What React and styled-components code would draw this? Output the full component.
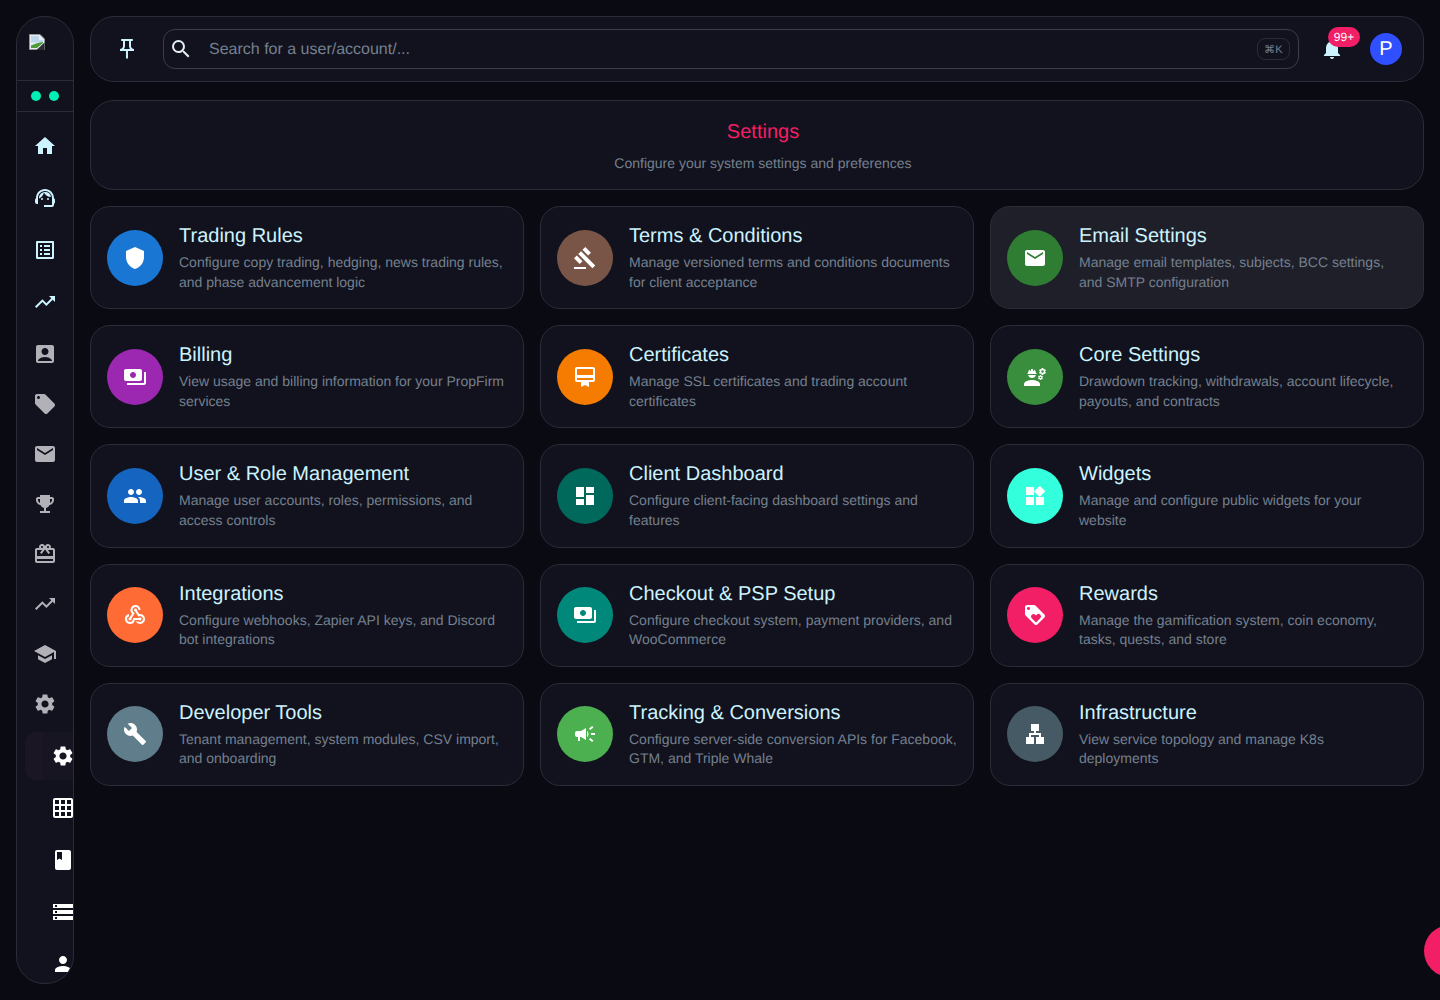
import React from 'react';
import styled, { createGlobalStyle } from 'styled-components';
import {
  MdHome, MdOutlineSupportAgent, MdOutlineListAlt, MdTrendingUp, MdAccountBox, MdLocalOffer, MdEmail,
  MdEmojiEvents, MdOutlineRedeem, MdSchool, MdSettings, MdGridOn, MdBook, MdStorage, MdPerson,
  MdOutlinePushPin, MdSearch, MdNotifications, MdShield, MdGavel, MdPayments, MdCardMembership,
  MdEngineering, MdPeople, MdDashboard, MdWidgets, MdWebhook, MdLoyalty, MdBuild, MdCampaign, MdLan,
} from 'react-icons/md';

const GlobalStyle = createGlobalStyle`
  html, body { margin: 0; padding: 0; height: 100%; background: #090a12; }
  body { font-family: "Liberation Sans", Arial, sans-serif; overflow: hidden; text-rendering: geometricPrecision; }
  * { box-sizing: border-box; }
`;

const mainNav = [
  { icon: MdHome, bright: true },
  { icon: MdOutlineSupportAgent, bright: true },
  { icon: MdOutlineListAlt, bright: true },
  { icon: MdTrendingUp, bright: true },
  { icon: MdAccountBox },
  { icon: MdLocalOffer },
  { icon: MdEmail },
  { icon: MdEmojiEvents },
  { icon: MdOutlineRedeem },
  { icon: MdTrendingUp },
  { icon: MdSchool },
  { icon: MdSettings },
];

const subNav = [
  { icon: MdSettings, active: true },
  { icon: MdGridOn },
  { icon: MdBook },
  { icon: MdStorage },
  { icon: MdPerson },
];

const cards = [
  { title: 'Trading Rules', text: 'Configure copy trading, hedging, news trading rules, and phase advancement logic', color: '#1976d2', icon: MdShield },
  { title: 'Terms & Conditions', text: 'Manage versioned terms and conditions documents for client acceptance', color: '#795548', icon: MdGavel },
  { title: 'Email Settings', text: 'Manage email templates, subjects, BCC settings, and SMTP configuration', color: '#2e7d32', icon: MdEmail, hovered: true },
  { title: 'Billing', text: 'View usage and billing information for your PropFirm services', color: '#9c27b0', icon: MdPayments },
  { title: 'Certificates', text: 'Manage SSL certificates and trading account certificates', color: '#f57c00', icon: MdCardMembership },
  { title: 'Core Settings', text: 'Drawdown tracking, withdrawals, account lifecycle, payouts, and contracts', color: '#388e3c', icon: MdEngineering },
  { title: 'User & Role Management', text: 'Manage user accounts, roles, permissions, and access controls', color: '#1565c0', icon: MdPeople },
  { title: 'Client Dashboard', text: 'Configure client-facing dashboard settings and features', color: '#00695c', icon: MdDashboard },
  { title: 'Widgets', text: 'Manage and configure public widgets for your website', color: '#33ffdd', icon: MdWidgets },
  { title: 'Integrations', text: 'Configure webhooks, Zapier API keys, and Discord bot integrations', color: '#ff6b35', icon: MdWebhook },
  { title: 'Checkout & PSP Setup', text: 'Configure checkout system, payment providers, and WooCommerce', color: '#00897b', icon: MdPayments },
  { title: 'Rewards', text: 'Manage the gamification system, coin economy, tasks, quests, and store', color: '#f21f66', icon: MdLoyalty },
  { title: 'Developer Tools', text: 'Tenant management, system modules, CSV import, and onboarding', color: '#607d8b', icon: MdBuild },
  { title: 'Tracking & Conversions', text: 'Configure server-side conversion APIs for Facebook, GTM, and Triple Whale', color: '#4caf50', icon: MdCampaign },
  { title: 'Infrastructure', text: 'View service topology and manage K8s deployments', color: '#455a64', icon: MdLan },
];

export default function App() {
  return (
    <>
      <GlobalStyle />
      <Page>
        <Sidebar>
          <LogoArea>
            <BrokenImage viewBox="0 0 16 16" aria-hidden="true">
              <path d="M0.5 0.5H11L15.5 5V15.5H0.5Z" fill="#e8eef0" stroke="#8f9699" />
              <path d="M2 2H10V6H14V8.5H2Z" fill="#bcd6ee" />
              <path d="M2 14V11.5L7 9.5L11 8.5L14 8V9L8 14Z" fill="#4f9a3c" />
              <path d="M15.5 8.5L7.5 16H15.5Z" fill="#2b2c33" />
            </BrokenImage>
          </LogoArea>
          <StatusRow>
            <StatusDot />
            <StatusDot />
          </StatusRow>
          <NavList>
            {mainNav.map(({ icon: Icon, bright }, i) => (
              <NavItem key={i} $bright={bright}>
                <Icon />
              </NavItem>
            ))}
            <SubNav>
              {subNav.map(({ icon: Icon, active }, i) => (
                <SubItem key={i} $active={active}>
                  <Icon />
                </SubItem>
              ))}
            </SubNav>
          </NavList>
        </Sidebar>

        <Main>
          <Topbar>
            <PinButton>
              <MdOutlinePushPin />
            </PinButton>
            <SearchBox>
              <SearchIcon>
                <MdSearch />
              </SearchIcon>
              <SearchInput>Search for a user/account/...</SearchInput>
              <Kbd>⌘K</Kbd>
            </SearchBox>
            <Bell>
              <MdNotifications />
              <Badge>99+</Badge>
            </Bell>
            <Avatar>P</Avatar>
          </Topbar>

          <HeaderCard>
            <PageTitle>Settings</PageTitle>
            <PageSubtitle>Configure your system settings and preferences</PageSubtitle>
          </HeaderCard>

          <CardGrid>
            {cards.map(({ title, text, color, icon: Icon, hovered }) => (
              <Card key={title} $hovered={hovered}>
                <IconCircle $color={color}>
                  <Icon />
                </IconCircle>
                <CardBody>
                  <CardTitle>{title}</CardTitle>
                  <CardText>{text}</CardText>
                </CardBody>
              </Card>
            ))}
          </CardGrid>
        </Main>

        <FloatingButton />
      </Page>
    </>
  );
}

const Page = styled.div`
  width: 1440px;
  height: 1000px;
  padding: 16px;
  display: flex;
  gap: 16px;
  background: #090a12;
`;

const Sidebar = styled.aside`
  width: 58px;
  height: 968px;
  flex-shrink: 0;
  display: flex;
  flex-direction: column;
  background: #11121d;
  border: 1px solid #2b2c38;
  border-radius: 28px;
  overflow: hidden;
`;

const LogoArea = styled.div`
  height: 64px;
  flex-shrink: 0;
  padding: 17px 0 0 12px;
  border-bottom: 1px solid #2b2c38;
`;

const BrokenImage = styled.svg`
  display: block;
  width: 16px;
  height: 16px;
`;

const StatusRow = styled.div`
  height: 31px;
  flex-shrink: 0;
  display: flex;
  align-items: center;
  justify-content: center;
  gap: 8px;
  border-bottom: 1px solid #2b2c38;
`;

const StatusDot = styled.span`
  width: 10px;
  height: 10px;
  border-radius: 50%;
  background: #00f0b5;
`;

const NavList = styled.nav`
  flex-shrink: 0;
  display: flex;
  flex-direction: column;
  padding-top: 8px;
`;

const NavItem = styled.div`
  height: 50px;
  flex-shrink: 0;
  display: flex;
  align-items: center;
  justify-content: center;
  font-size: 24px;
  color: ${(p) => (p.$bright ? '#cdf3ff' : '#b3b1b8')};
  &:nth-child(-n + 4) { height: 52px; }
  &:nth-child(5) { margin-top: 1px; }
`;

const SubNav = styled.div`
  display: flex;
  flex-direction: column;
  margin-top: 1px;
`;

const SubItem = styled.div`
  height: 48px;
  flex-shrink: 0;
  margin: 2px 0 2px 8px;
  padding-left: 26px;
  display: flex;
  align-items: center;
  font-size: 24px;
  color: #fff;
  border-radius: 12px 0 0 12px;
  background: ${(p) => (p.$active ? 'linear-gradient(90deg, #1a1623 18px, #161521 18px)' : 'transparent')};
  svg { flex-shrink: 0; }
`;

const Main = styled.main`
  flex: 1;
  min-width: 0;
  display: flex;
  flex-direction: column;
`;

const Topbar = styled.header`
  height: 66px;
  flex-shrink: 0;
  display: flex;
  align-items: center;
  padding: 0 21px 0 16px;
  background: #11121d;
  border: 1px solid #2b2c38;
  border-radius: 24px;
`;

const PinButton = styled.div`
  width: 40px;
  display: flex;
  justify-content: center;
  font-size: 24px;
  color: #cdf3ff;
  margin-right: 16px;
`;

const SearchBox = styled.div`
  width: 1136px;
  height: 40px;
  display: flex;
  align-items: center;
  padding: 0 8px 0 5px;
  border: 1px solid #3c3d49;
  border-radius: 12px;
`;

const SearchIcon = styled.div`
  display: flex;
  font-size: 24px;
  color: #e4eef3;
  margin-right: 16px;
`;

const SearchInput = styled.div`
  flex: 1;
  padding-top: 1px;
  font-size: 16px;
  color: #75808f;
`;

const Kbd = styled.span`
  height: 22px;
  padding: 0 6px;
  display: flex;
  align-items: center;
  font-size: 11px;
  letter-spacing: 0.3px;
  color: #77808c;
  border: 1px solid #2b2c38;
  border-radius: 8px;
`;

const Bell = styled.div`
  position: relative;
  margin-left: 21px;
  width: 24px;
  height: 24px;
  font-size: 24px;
  color: #cdf3ff;
  display: flex;
`;

const Badge = styled.span`
  position: absolute;
  top: -10px;
  left: 8px;
  width: 32px;
  height: 20px;
  display: flex;
  align-items: center;
  justify-content: center;
  font-size: 12px;
  color: #fff;
  background: #f21f66;
  border-radius: 10px;
`;

const Avatar = styled.div`
  margin-left: 26px;
  width: 32px;
  height: 32px;
  display: flex;
  align-items: center;
  justify-content: center;
  font-size: 20px;
  color: #fff;
  background: #304ffe;
  border-radius: 50%;
`;

const HeaderCard = styled.section`
  height: 90px;
  margin-top: 18px;
  flex-shrink: 0;
  display: flex;
  flex-direction: column;
  align-items: center;
  padding: 19px 0 0 12px;
  background: #11121d;
  border: 1px solid #2b2c38;
  border-radius: 24px;
`;

const PageTitle = styled.h1`
  margin: 0;
  font-size: 20px;
  font-weight: 400;
  line-height: 24px;
  color: #f21f66;
`;

const PageSubtitle = styled.p`
  margin: 9px 0 0;
  font-size: 14px;
  line-height: 20px;
  color: #75808f;
`;

const CardGrid = styled.div`
  margin-top: 16px;
  display: grid;
  grid-template-columns: repeat(3, 434px);
  grid-auto-rows: 103.2px;
  gap: 16px;
`;

const Card = styled.article`
  display: flex;
  align-items: center;
  padding: 0 16px;
  gap: 16px;
  background: ${(p) => (p.$hovered ? '#1e1f29' : '#11121d')};
  border: 1px solid #2b2c38;
  border-radius: 20px;
`;

const IconCircle = styled.div`
  width: 56px;
  height: 56px;
  flex-shrink: 0;
  display: flex;
  align-items: center;
  justify-content: center;
  font-size: 24px;
  color: #fff;
  background: ${(p) => p.$color};
  border-radius: 50%;
`;

const CardBody = styled.div`
  min-width: 0;
  padding-bottom: 1px;
`;

const CardTitle = styled.h2`
  margin: 0 0 3px;
  font-size: 20px;
  font-weight: 400;
  line-height: 28px;
  color: #cdf3ff;
`;

const CardText = styled.p`
  margin: 0;
  font-size: 14px;
  line-height: 1.4;
  color: #75808f;
`;

const FloatingButton = styled.div`
  position: fixed;
  left: 1424px;
  top: 925px;
  width: 52px;
  height: 52px;
  background: #f21f66;
  border-radius: 50%;
`;
